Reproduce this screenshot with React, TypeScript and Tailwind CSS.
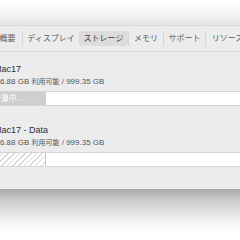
import React from "react";

const font = { fontFamily: '"Liberation Sans", "Noto Sans CJK JP", sans-serif' };

interface Tab {
  label: string;
  width: string;
  selected?: boolean;
  sep?: boolean;
}

const tabs: Tab[] = [
  { label: "概要", width: "w-[29px]" },
  { label: "ディスプレイ", width: "w-[57px]", sep: true },
  { label: "ストレージ", width: "w-[49px]", selected: true },
  { label: "メモリ", width: "w-[35px]", sep: true },
  { label: "サポート", width: "w-[42px]", sep: true },
  { label: "リソース", width: "w-[44px]", sep: true },
];

function Volume({ name, busy }: { name: string; busy?: boolean }) {
  return (
    <div className="flex flex-col">
      <div className="ml-[-6px] text-[9px] leading-[10px] font-medium text-[#2e2e2e] whitespace-nowrap">{name}</div>
      <div className="ml-[-9px] mt-[3px] text-[8px] leading-[10px] text-[#565656] whitespace-nowrap">
        776.88 GB <span className="text-[7px]">利用可能</span> / 999.35 GB
      </div>
      <div className="ml-[-10px] mt-[4px] w-[262px] h-[15px] bg-white border border-[#d4d4d4] flex">
        {busy ? (
          <div className="w-[55px] h-full bg-[#cfcfcf] flex items-center pl-[3px] text-[7.5px] text-white whitespace-nowrap">
            計算中...
          </div>
        ) : (
          <div className="w-[55px] h-full border-r border-[#c4c4c4] bg-[repeating-linear-gradient(135deg,#d6d6d6_0px,#d6d6d6_1px,#ffffff_1px,#ffffff_4px)]" />
        )}
      </div>
    </div>
  );
}

export default function App() {
  return (
    <div className="w-[240px] h-[240px] overflow-hidden bg-white flex flex-col" style={font}>
      {/* title bar fade */}
      <div className="h-[25px] shrink-0 bg-[linear-gradient(#ffffff,#f9f9f9_40%,#e5e5e5)]" />

      {/* window */}
      <div className="h-[164px] shrink-0 bg-[#ececec] border-t border-[#d8d8d8] flex flex-col">
        <div className="h-[26px] shrink-0 border-b border-[#d9d9d9] pt-[5px]">
          <div className="flex ml-[-7px] h-[15px]">
            {tabs.map(t => (
              <div
                key={t.label}
                className={`${t.width} shrink-0 flex items-center justify-center text-[8px] whitespace-nowrap ${
                  t.selected ? "bg-[#dcdcdc] rounded-[3px] text-[#3a3a3a]" : "text-[#5c5c5c]"
                } ${t.sep ? "border-l border-[#d6d6d6]" : ""}`}
              >
                {t.label}
              </div>
            ))}
          </div>
        </div>

        <div className="flex flex-col pt-[12px]">
          <Volume name="Mac17" busy />
          <div className="mt-[19px]">
            <Volume name="Mac17 - Data" />
          </div>
        </div>
      </div>

      {/* drop shadow */}
      <div className="flex-1 bg-[linear-gradient(#a7a7a7,#c9c9c9_20%,#ececec_55%,#ffffff_85%)]" />
    </div>
  );
}
